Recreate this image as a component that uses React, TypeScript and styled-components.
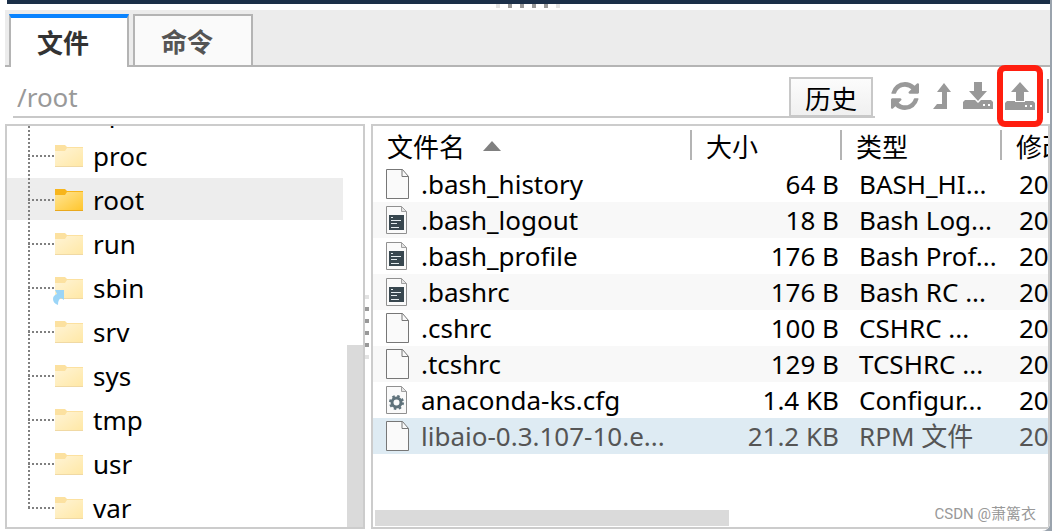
import React from 'react';
import styled, { createGlobalStyle, css } from 'styled-components';

const Global = createGlobalStyle`
  * { box-sizing: border-box; }
  html, body, #root { height: 100%; }
  body {
    margin: 0;
    overflow: hidden;
    background: #9aa3ad;
    color: #000;
    font-family: "Noto Sans", "Noto Sans CJK SC", sans-serif;
    font-size: 26px;
    line-height: 36px;
  }
  button, input { font: inherit; }
`;

const Window = styled.main`
  position: relative;
  display: flex;
  flex-direction: column;
  height: 100%;
  margin-right: 2px;
  padding: 0 0 2px 5px;
  overflow: hidden;
  background: #fff;
  border-bottom-right-radius: 8px;
`;

const Terminal = styled.div`
  flex: none;
  height: 4px;
  margin-left: 2px;
  background: #1b2f48;
`;

const Splitter = styled.div<{ $vertical?: boolean }>`
  display: flex;
  flex: none;
  align-items: center;
  justify-content: center;
  gap: 8px;
  ${(p) => (p.$vertical
    ? css`flex-direction: column; width: 6px; padding-right: 2px;`
    : css`height: 6px; padding-bottom: 2px;`)}
`;

const Dot = styled.i<{ $faint?: boolean }>`
  width: 4px;
  height: 4px;
  background: ${(p) => (p.$faint ? '#e2e2e2' : '#999')};
`;

const Tabs = styled.div`
  display: flex;
  flex: none;
  gap: 4px;
  height: 57px;
  padding: 4px 4px 0;
  background: linear-gradient(#ececec 55px, #b4b4b4 55px);
`;

const Tab = styled.button<{ $active?: boolean }>`
  width: 120px;
  padding: 2px 12px 0 0;
  border: 2px solid #b4b4b4;
  background: #fafafa;
  color: #555;
  font-weight: 700;
  ${(p) => p.$active && css`
    padding-top: 0;
    border-top: 4px solid #0a84ff;
    border-bottom: 0;
    background: #fff;
    color: #333;
  `}
`;

const Toolbar = styled.div`
  display: flex;
  flex: none;
  align-items: flex-start;
  height: 57px;
  padding: 10px 0 0 8px;
`;

const PathBar = styled.div`
  display: flex;
  flex: 1;
  min-width: 0;
  height: 41px;
  padding-right: 2px;
  border-bottom: 2px solid #c8c8c8;
`;

const PathInput = styled.input`
  flex: 1;
  min-width: 0;
  padding: 0 4px;
  border: 0;
  outline: 0;
  background: transparent;
  color: #999;
`;

const HistoryButton = styled.button`
  width: 84px;
  height: 40px;
  padding: 2px 0 0;
  border: 2px solid #c8c8c8;
  background: linear-gradient(#fcfcfc, #f0f0f0);
  color: #000;
`;

const Tools = styled.div`
  display: flex;
  flex: none;
  align-items: center;
  gap: 12px;
  height: 37px;
  padding: 0 1px 0 16px;
`;

const ToolButton = styled.button`
  position: relative;
  display: flex;
  padding: 0;
  border: 0;
  background: none;
  color: #999;
`;

const Highlight = styled.span`
  position: absolute;
  inset: -17px -8px;
  z-index: 1;
  border: 6px solid #ff1e0f;
  border-radius: 8px;
`;

const ToolEdge = styled.i`
  width: 2px;
  height: 34px;
  background: #999;
`;

const Panels = styled.div`
  display: flex;
  flex: 1;
  min-height: 0;
`;

const Panel = styled.section`
  display: flex;
  min-width: 0;
  overflow: hidden;
  border: 2px solid #ccc;
  background: #fff;
`;

const TreePanel = styled(Panel)`
  flex: 0 0 360px;
`;

const FilesPanel = styled(Panel)`
  flex: 1;
  flex-direction: column;
  justify-content: space-between;
`;

const Tree = styled.ul`
  flex: 1;
  margin: -36px 0 0;
  padding: 0;
  list-style: none;
`;

const Node = styled.li<{ $selected?: boolean }>`
  display: flex;
  align-items: center;
  height: 44px;
  padding-left: 21px;
  background: ${(p) => (p.$selected ? 'linear-gradient(#ededed 42px, transparent 42px)' : 'none')};
`;

const Branch = styled.span<{ $last?: boolean }>`
  width: 27px;
  height: 44px;
  background:
    repeating-linear-gradient(#808080 0 2px, transparent 2px 4px) 0 0 / 2px ${(p) => (p.$last ? '22px' : '44px')} no-repeat,
    repeating-linear-gradient(90deg, #808080 0 2px, transparent 2px 4px) 0 21px / 26px 2px no-repeat;
`;

const NodeName = styled.span`
  margin-left: 10px;
`;

const ScrollTrack = styled.div`
  display: flex;
  flex: none;
  flex-direction: column;
  justify-content: flex-end;
  width: 16px;
  margin-left: 4px;
`;

const ScrollThumb = styled.div`
  height: 182px;
  background: #dadada;
`;

const ScrollBar = styled.div`
  flex: none;
  height: 17px;
  padding: 0 2px;
`;

const HorizontalThumb = styled.div`
  width: 354px;
  height: 16px;
  background: #dadada;
`;

const FileTable = styled.table`
  width: 928px;
  border-spacing: 0;
  table-layout: fixed;
`;

const Column = styled.col<{ $width: number }>`
  width: ${(p) => p.$width}px;
`;

const HeadCell = styled.th`
  height: 40px;
  padding: 2px 0 0 14px;
  background: linear-gradient(#b4b4b4, #b4b4b4) right 4px / 2px 30px no-repeat;
  font-weight: 400;
  text-align: left;
`;

const SortArrow = styled.svg`
  margin-left: 18px;
  vertical-align: 6px;
`;

const FileRow = styled.tr<{ $selected?: boolean }>`
  &:nth-child(even) { background: #f8f8f8; }
  ${(p) => p.$selected && css`
    && { background: #deebf3; }
    color: #555;
  `}
`;

const Cell = styled.td<{ $right?: boolean }>`
  height: 36px;
  padding: 0 3px 0 17px;
  overflow: hidden;
  line-height: 36px;
  text-align: ${(p) => (p.$right ? 'right' : 'left')};
  white-space: nowrap;
`;

const NameLine = styled.div`
  display: flex;
  align-items: center;
  gap: 11px;
  height: 36px;
  margin-left: -4px;
`;

const Watermark = styled.div`
  position: absolute;
  right: 14px;
  bottom: 6px;
  color: #999;
  font-family: Roboto, "Noto Sans CJK SC", sans-serif;
  font-size: 15px;
  line-height: 22px;
`;

function Folder({ open, link }: { open?: boolean; link?: boolean }) {
  const id = open ? 'folder-strong' : 'folder-pale';
  return (
    <svg width="28" height="24" viewBox="0 0 28 24" aria-hidden="true" overflow="visible">
      <defs>
        <linearGradient id={id} x1="0" y1="0" x2="1" y2="1">
          <stop offset="0" stopColor={open ? '#ffe595' : '#fff4d6'} />
          <stop offset="1" stopColor={open ? '#ffc62e' : '#ffe8a6'} />
        </linearGradient>
      </defs>
      <path d="M0 1h10l2 2h16v4H0z" fill={open ? '#f7b51c' : '#fce1a0'} />
      <path d="M0 7h10l2-3h16v18H0z" fill={`url(#${id})`} />
      <path d="M0 22h28v1H0z" fill={open ? '#e9a81c' : '#f0d9a4'} />
      {link && (
        <path d="M0 14h9v10l-3-2c-2 1-3 3-3 7-3-1-5-3-5-6 0-3 2-4 4-5z" fill="#9bd5f7" />
      )}
    </svg>
  );
}

function FileIcon({ kind }: { kind: string }) {
  if (kind === 'plain') {
    return (
      <svg width="24" height="30" viewBox="0 0 24 30" aria-hidden="true">
        <path d="M.5.5h16l6 7v22H.5z" fill="#fafafa" stroke="#777" />
        <path d="M16 .5v7h6.500" fill="none" stroke="#777" />
      </svg>
    );
  }
  return (
    <svg width="24" height="28" viewBox="0 0 24 28" aria-hidden="true">
      <path d="M.5.5h15l5 5v22H.5z" fill="#fafafa" stroke="#909090" />
      <path d="M15.500.5v5h5z" fill="#e4e4e4" stroke="#a0a0a0" />
      {kind === 'shell' && (
        <>
          <path d="M3 9h15v15H3z" fill="#38474f" />
          <path d="M5 11.500h2M5 14.500h10M5 17.500h6M5 21.500h8" fill="none" stroke="#e4ecef" />
        </>
      )}
      {kind === 'config' && (
        <>
          <circle cx="10.500" cy="16.500" r="4.500" fill="none" stroke="#5f727b" strokeWidth="3" />
          <circle cx="10.500" cy="16.500" r="6.500" fill="none" stroke="#5f727b" strokeWidth="2" strokeDasharray="2.550 2.550" />
        </>
      )}
    </svg>
  );
}

function RefreshIcon() {
  return (
    <svg width="28" height="28" viewBox="0 128 1536 1536" fill="currentColor" aria-hidden="true">
      <path d="M1511 1056q0 5-1 7-64 268-268 434.500t-478 166.500q-146 0-282.500-55t-243.500-157l-129 129q-19 19-45 19t-45-19-19-45v-448q0-26 19-45t45-19h448q26 0 45 19t19 45-19 45l-137 137q71 66 161 102t187 36q134 0 250-65t186-179q11-17 53-117 8-23 30-23h192q13 0 22.500 9.500t9.500 22.500zM1536 256v448q0 26-19 45t-45 19h-448q-26 0-45-19t-19-45 19-45l138-138q-148-137-349-137-134 0-250 65t-186 179q-11 17-53 117-8 23-30 23h-199q-13 0-22.500-9.500t-9.500-22.500v-7q65-268 270-434.500t480-166.500q146 0 284 55.500t245 156.500l130-129q19-19 45-19t45 19 19 45z" />
    </svg>
  );
}

function LevelUpIcon() {
  return (
    <svg width="20" height="28" viewBox="0 0 20 28" fill="currentColor" aria-hidden="true">
      <path d="M13 1l7 9h-4v17H2l4-5h5V10H6z" />
    </svg>
  );
}

function TransferIcon({ up }: { up?: boolean }) {
  return (
    <svg width="30" height="28" viewBox="0 0 30 28" fill="currentColor" aria-hidden="true">
      {up ? (
        <>
          <path d="M15 0l9 10h-5v9h-8v-9H6z" />
          <path fillRule="evenodd" d="M2 19h8v1h10v-1h8l2 2v7H0v-7zM20 23v2h2v-2zM25 23v2h2v-2z" />
        </>
      ) : (
        <>
          <path d="M11 0h8v9h5l-9 10L6 9h5z" />
          <path fillRule="evenodd" d="M2 18h10l3 3 3-3h10l2 2v7H0v-7zM20 22v2h2v-2zM25 22v2h2v-2z" />
        </>
      )}
    </svg>
  );
}

const folders = ['opt', 'proc', 'root', 'run', 'sbin', 'srv', 'sys', 'tmp', 'usr', 'var'];

const files = [
  ['.bash_history', '64 B', 'BASH_HI...', 'plain'],
  ['.bash_logout', '18 B', 'Bash Log...', 'shell'],
  ['.bash_profile', '176 B', 'Bash Prof...', 'shell'],
  ['.bashrc', '176 B', 'Bash RC ...', 'shell'],
  ['.cshrc', '100 B', 'CSHRC ...', 'plain'],
  ['.tcshrc', '129 B', 'TCSHRC ...', 'plain'],
  ['anaconda-ks.cfg', '1.4 KB', 'Configur...', 'config'],
  ['libaio-0.3.107-10.e...', '21.2 KB', 'RPM 文件', 'plain'],
];

const dots = [0, 1, 2, 3, 4, 5];

function Grip({ vertical }: { vertical?: boolean }) {
  return (
    <Splitter $vertical={vertical}>
      {dots.map((d) => <Dot key={d} $faint={d === 0 || d === 5} />)}
    </Splitter>
  );
}

export default function App() {
  return (
    <>
      <Global />
      <Window>
        <Terminal />
        <Grip />
        <Tabs role="tablist">
          <Tab role="tab" aria-selected="true" $active>文件</Tab>
          <Tab role="tab" aria-selected="false">命令</Tab>
        </Tabs>
        <Toolbar>
          <PathBar>
            <PathInput aria-label="路径" defaultValue="/root" />
            <HistoryButton>历史</HistoryButton>
          </PathBar>
          <Tools>
            <ToolButton aria-label="刷新"><RefreshIcon /></ToolButton>
            <ToolButton aria-label="上级目录"><LevelUpIcon /></ToolButton>
            <ToolButton aria-label="下载"><TransferIcon /></ToolButton>
            <ToolButton aria-label="上传"><TransferIcon up /><Highlight /></ToolButton>
            <ToolEdge />
          </Tools>
        </Toolbar>
        <Panels>
          <TreePanel>
            <Tree>
              {folders.map((name) => (
                <Node key={name} $selected={name === 'root'}>
                  <Branch $last={name === 'var'} />
                  <Folder open={name === 'root'} link={name === 'sbin'} />
                  <NodeName>{name}</NodeName>
                </Node>
              ))}
            </Tree>
            <ScrollTrack><ScrollThumb /></ScrollTrack>
          </TreePanel>
          <Grip vertical />
          <FilesPanel>
            <FileTable>
              <colgroup>
                <Column $width={319} />
                <Column $width={150} />
                <Column $width={160} />
                <Column $width={299} />
              </colgroup>
              <thead>
                <tr>
                  <HeadCell aria-sort="ascending">
                    文件名
                    <SortArrow width="18" height="10" viewBox="0 0 18 10" aria-hidden="true">
                      <path d="M9 0l9 10H0z" fill="#808080" />
                    </SortArrow>
                  </HeadCell>
                  <HeadCell>大小</HeadCell>
                  <HeadCell>类型</HeadCell>
                  <HeadCell>修改时间</HeadCell>
                </tr>
              </thead>
              <tbody>
                {files.map(([name, size, type, kind]) => (
                  <FileRow key={name} $selected={name.startsWith('libaio')}>
                    <Cell><NameLine><FileIcon kind={kind} />{name}</NameLine></Cell>
                    <Cell $right>{size}</Cell>
                    <Cell>{type}</Cell>
                    <Cell>2023</Cell>
                  </FileRow>
                ))}
              </tbody>
            </FileTable>
            <ScrollBar><HorizontalThumb /></ScrollBar>
          </FilesPanel>
        </Panels>
        <Watermark>CSDN @萧篱衣</Watermark>
      </Window>
    </>
  );
}
